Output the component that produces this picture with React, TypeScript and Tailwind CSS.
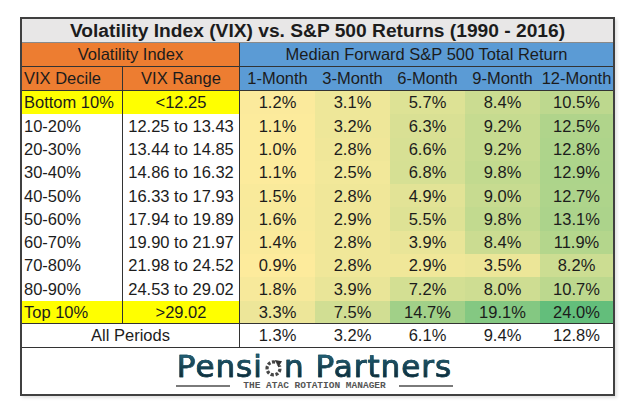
import React from "react";

type Row = { d: string; r: string; v: number[]; hl?: boolean };

const rows: Row[] = [
  { d: "Bottom 10%", r: "<12.25", v: [1.2, 3.1, 5.7, 8.4, 10.5], hl: true },
  { d: "10-20%", r: "12.25 to 13.43", v: [1.1, 3.2, 6.3, 9.2, 12.5] },
  { d: "20-30%", r: "13.44 to 14.85", v: [1.0, 2.8, 6.6, 9.2, 12.8] },
  { d: "30-40%", r: "14.86 to 16.32", v: [1.1, 2.5, 6.8, 9.8, 12.9] },
  { d: "40-50%", r: "16.33 to 17.93", v: [1.5, 2.8, 4.9, 9.0, 12.7] },
  { d: "50-60%", r: "17.94 to 19.89", v: [1.6, 2.9, 5.5, 9.8, 13.1] },
  { d: "60-70%", r: "19.90 to 21.97", v: [1.4, 2.8, 3.9, 8.4, 11.9] },
  { d: "70-80%", r: "21.98 to 24.52", v: [0.9, 2.8, 2.9, 3.5, 8.2] },
  { d: "80-90%", r: "24.53 to 29.02", v: [1.8, 3.9, 7.2, 8.0, 10.7] },
  { d: "Top 10%", r: ">29.02", v: [3.3, 7.5, 14.7, 19.1, 24.0], hl: true },
];

const allPeriods = [1.3, 3.2, 6.1, 9.4, 12.8];
const months = ["1-Month", "3-Month", "6-Month", "9-Month", "12-Month"];
const colW = ["w-[75px]", "w-[75px]", "w-[75px]", "w-[75px]", "flex-1"];

function heat(v: number): string {
  const lo = [253, 235, 156];
  const hi = [99, 190, 123];
  const t = Math.max(0, Math.min(1, (v - 0.9) / (24.0 - 0.9)));
  const c = lo.map((a, i) => Math.round(a + (hi[i] - a) * t));
  return `rgb(${c[0]}, ${c[1]}, ${c[2]})`;
}

function RingIcon() {
  return (
    <svg width="19" height="18" viewBox="0 0 20 20" className="inline-block mx-[1px] align-baseline">
      <circle
        cx="10"
        cy="10.5"
        r="7.2"
        fill="none"
        stroke="#464646"
        strokeWidth="3.6"
        strokeDasharray="3.4 1.8"
        transform="rotate(-40 10 10.5)"
      />
      <rect x="13" y="0" width="8" height="7" fill="white" />
      <polygon points="11.5,1 19.5,2.5 15.5,9" fill="#333333" />
    </svg>
  );
}

export default function App() {
  return (
    <div className="w-[640px] h-[406px] bg-white pt-[17px] pl-[20px] font-['Liberation_Sans',Arial,sans-serif] text-[#1c1c1c]">
      <div className="w-[595px] border-2 border-[#404040] flex flex-col shadow-[2px_2px_3px_rgba(0,0,0,0.12)]">
        {/* Title */}
        <div className="h-[24px] bg-[#e8e7e7] border-b border-[#8a8a8a] flex items-center justify-center text-[19.2px] font-bold leading-none">
          Volatility Index (VIX) vs. S&amp;P 500 Returns (1990 - 2016)
        </div>
        {/* Header row 1 */}
        <div className="h-[24px] flex border-b border-[#333] text-[16.5px] leading-none">
          <div className="w-[218px] bg-[#ed7d31] border-r border-[#333] flex items-center justify-center">
            Volatility Index
          </div>
          <div className="flex-1 bg-[#5b9bd5] flex items-center justify-center">
            Median Forward S&amp;P 500 Total Return
          </div>
        </div>
        {/* Header row 2 */}
        <div className="h-[24px] flex border-b border-[#333] text-[16.5px] leading-none">
          <div className="w-[101px] bg-[#ed7d31] border-r border-[#333] flex items-center pl-[2px]">VIX Decile</div>
          <div className="w-[117px] bg-[#ed7d31] border-r border-[#333] flex items-center justify-center">VIX Range</div>
          {months.map((m, i) => (
            <div key={m} className={`${colW[i]} bg-[#5b9bd5] flex items-center justify-center`}>
              {m}
            </div>
          ))}
        </div>
        {/* Data rows */}
        {rows.map((row, ri) => (
          <div
            key={row.d}
            className={`h-[23.3px] flex text-[16.5px] leading-none ${ri === rows.length - 1 ? "border-b border-[#333]" : ""}`}
          >
            <div
              className={`w-[101px] border-r border-[#333] flex items-center pl-[2px] ${row.hl ? "bg-[#ffff00]" : "bg-white"}`}
            >
              {row.d}
            </div>
            <div
              className={`w-[117px] border-r border-[#333] flex items-center justify-center ${row.hl ? "bg-[#ffff00]" : "bg-white"}`}
            >
              {row.r}
            </div>
            {row.v.map((v, i) => (
              <div
                key={i}
                className={`${colW[i]} flex items-center justify-center`}
                style={{ backgroundColor: heat(v) }}
              >
                {v.toFixed(1)}%
              </div>
            ))}
          </div>
        ))}
        {/* All Periods */}
        <div className="h-[24px] flex border-b border-[#333] text-[16.5px] leading-none bg-white">
          <div className="w-[218px] border-r border-[#333] flex items-center justify-center">All Periods</div>
          {allPeriods.map((v, i) => (
            <div key={i} className={`${colW[i]} flex items-center justify-center`}>
              {v.toFixed(1)}%
            </div>
          ))}
        </div>
        {/* Logo */}
        <div className="h-[46px] bg-white flex flex-col items-center pr-[6px]">
          <div className="h-[26px] font-['DejaVu_Sans',sans-serif] text-[31px] leading-[26px] mt-[5px] tracking-[1px] whitespace-nowrap [-webkit-text-stroke:0.6px_#15404f]">
            <span className="inline-block h-[26px] bg-gradient-to-b from-[#22667d] to-[#0a2835] bg-clip-text text-transparent">Pensi</span>
            <RingIcon />
            <span className="inline-block h-[26px] bg-gradient-to-b from-[#22667d] to-[#0a2835] bg-clip-text text-transparent">n Partners</span>
          </div>
          <div className="flex items-center gap-[13px] mt-[2px]">
            <div className="w-[54px] h-[2px] bg-[#7a7a7a]" />
            <div className="font-['Liberation_Mono',monospace] font-bold text-[9.5px] leading-none text-[#555] whitespace-nowrap">
              THE ATAC ROTATION MANAGER
            </div>
            <div className="w-[54px] h-[2px] bg-[#7a7a7a]" />
          </div>
        </div>
      </div>
    </div>
  );
}
